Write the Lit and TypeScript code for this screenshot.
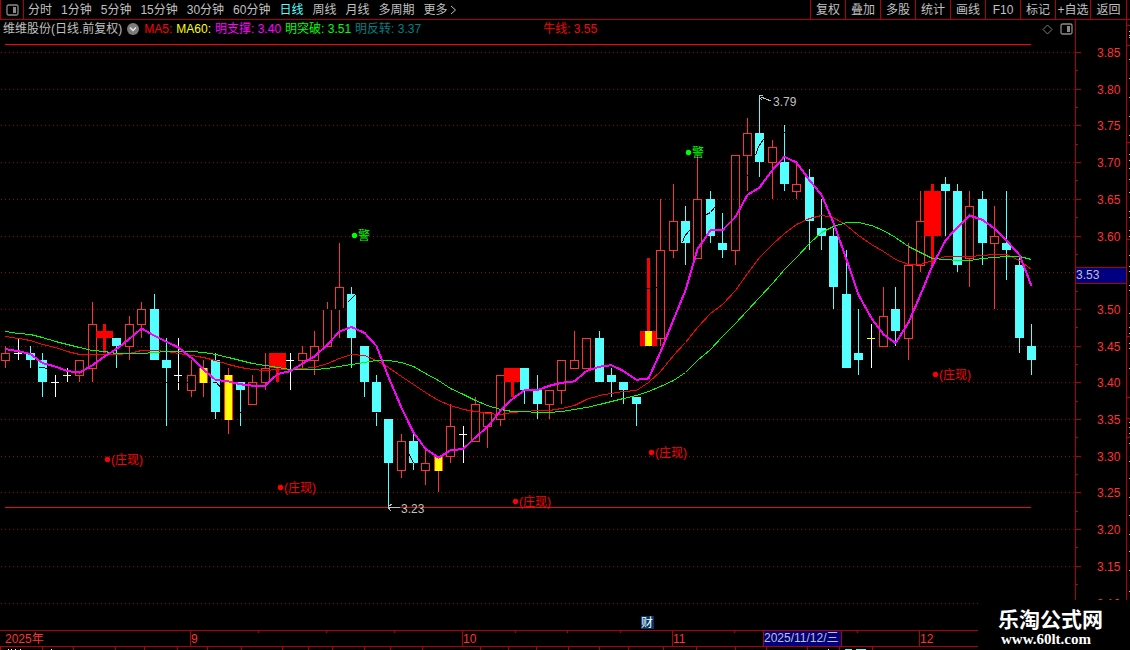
import { LitElement, html, svg, css } from "lit";
import { customElement, state } from "lit/decorators.js";

type Kind = "up" | "down" | "doji" | "turn" | "hot" | "fade" | "launch" | "spark";
/** body top, body bottom, high, low (in cents), kind */
type Bar = [number, number, number, number, Kind];

const BARS: Bar[] = [
  [344, 343, 345, 342, "up"], [344, 344, 346, 343, "doji"], [344, 343, 345, 342, "down"],
  [343, 340, 344, 338, "down"], [340, 340, 341, 338, "doji"], [341, 341, 342, 340, "spark"],
  [343, 341, 343, 340, "up"], [348, 342, 351, 340, "up"], [347, 346, 348, 344, "fade"],
  [346, 345, 346, 342, "down"], [348, 345, 349, 343, "up"], [350, 348, 351, 346, "up"],
  [350, 343, 352, 343, "down"], [343, 342, 346, 334, "down"], [341, 341, 346, 339, "doji"],
  [341, 339, 343, 338, "up"], [342, 340, 343, 338, "turn"], [343, 336, 344, 335, "down"],
  [341, 335, 342, 333, "turn"], [340, 339, 340, 334, "down"], [340, 337, 341, 337, "up"],
  [342, 340, 344, 339, "up"], [344, 342, 344, 340, "hot"], [343, 343, 344, 339, "doji"],
  [344, 343, 345, 342, "up"], [345, 343, 347, 341, "up"], [350, 345, 351, 345, "up"],
  [353, 350, 359, 346, "up"], [352, 346, 353, 342, "down"], [345, 340, 345, 338, "down"],
  [340, 336, 341, 334, "down"], [335, 329, 335, 323, "down"], [332, 328, 333, 327, "up"],
  [332, 329, 333, 328, "down"], [329, 328, 331, 326, "up"], [330, 328, 330, 325, "turn"],
  [334, 330, 337, 329, "up"], [333, 333, 334, 329, "doji"], [337, 332, 338, 332, "up"],
  [336, 334, 336, 331, "up"], [341, 335, 341, 334, "up"], [342, 340, 342, 338, "hot"],
  [342, 339, 342, 337, "down"], [339, 337, 341, 335, "down"], [339, 337, 339, 335, "up"],
  [343, 339, 343, 337, "up"], [343, 342, 347, 342, "up"], [346, 342, 346, 342, "up"],
  [346, 340, 347, 340, "down"], [341, 340, 342, 338, "down"], [340, 339, 340, 337, "down"],
  [338, 337, 338, 334, "down"], [347, 345, 357, 345, "launch"], [358, 346, 365, 345, "up"],
  [362, 358, 367, 357, "up"], [362, 359, 364, 356, "down"], [365, 357, 371, 357, "up"],
  [365, 360, 366, 359, "down"], [359, 358, 363, 357, "down"], [371, 358, 371, 356, "up"],
  [374, 371, 376, 366, "up"], [374, 370, 379, 368, "down"], [372, 370, 373, 365, "up"],
  [370, 367, 375, 366, "down"], [367, 366, 370, 365, "up"], [368, 362, 369, 358, "down"],
  [361, 360, 365, 358, "down"], [360, 353, 361, 350, "down"], [352, 342, 358, 342, "down"],
  [344, 343, 350, 341, "down"], [346, 346, 348, 342, "spark"], [349, 345, 353, 345, "up"],
  [350, 347, 353, 345, "down"], [356, 346, 359, 343, "up"], [362, 356, 366, 355, "up"],
  [366, 360, 367, 356, "hot"], [367, 366, 368, 360, "down"], [366, 356, 367, 355, "down"],
  [364, 357, 366, 353, "up"], [365, 359, 366, 356, "down"], [360, 359, 364, 350, "up"],
  [359, 358, 366, 354, "down"], [356, 346, 357, 344, "down"], [345, 343, 348, 341, "down"],
];

/** Averages that reach back before the first visible bar. */
const LEAD_IN = [344.6, 344.3, 343.9, 342.7];

/** Mid-term trend, plot height at each bar. */
const MID_TREND = [
  336, 338, 340, 344, 347, 351, 354, 354, 354, 354, 353, 350, 350, 351, 353, 355, 357, 360, 364, 367, 369,
  370, 369, 369, 368, 367, 363, 358, 354, 355, 360, 367, 376, 384, 392, 400, 405, 409, 411, 413, 414, 412,
  411, 410, 410, 408, 405, 399, 395, 393, 391, 390, 382, 371, 355, 342, 327, 313, 304, 290, 273, 257, 244,
  233, 224, 218, 215, 217, 225, 235, 244, 251, 259, 264, 264, 260, 256, 256, 256, 255, 254, 254, 260, 269,
];

/** Long-term trend, plot height at each bar. */
const LONG_TREND = [
  331, 333, 334, 337, 341, 344, 347, 350, 351, 353, 353, 353, 352, 351, 351, 351, 352, 354, 357, 360, 363,
  365, 367, 369, 369, 369, 368, 366, 364, 362, 360, 360, 362, 366, 373, 380, 388, 394, 400, 405, 409, 411,
  411, 412, 412, 411, 409, 407, 404, 401, 398, 395, 391, 386, 380, 372, 360, 349, 336, 323, 310, 297, 283,
  269, 257, 243, 232, 226, 222, 222, 225, 230, 237, 246, 252, 258, 259, 260, 260, 258, 257, 256, 256, 259,
];

/** Black trace crossing the candles: bar index, then x offset / y pairs. */
const CUTS: [number, number[][]][] = [
  [3, [[-4, 367], [2, 367], [5, 369]]],
  [13, [[-3, 382], [28, 382]]],
  [17, [[-3, 382], [1, 382], [5, 387]]],
  [19, [[-4, 412], [4, 412]]],
  [26, [[-8, 309], [16, 309], [18, 304]]],
  [28, [[-4, 302], [4, 294]]],
  [30, [[-4, 412], [4, 412]]],
  [33, [[-4, 454], [0, 463]]],
  [53, [[-16, 288], [-4, 287], [4, 281]]],
  [55, [[-3, 242], [-1, 236], [4, 230]]],
  [57, [[-4, 214], [0, 212], [4, 207]]],
  [60, [[-4, 176], [4, 175]]],
  [61, [[-4, 155], [-1, 146], [4, 139]]],
  [63, [[-4, 132], [4, 132]]],
];

const SIGNALS: { bar: number; y: number; text: string; tone: string }[] = [
  { bar: 8, y: 459, text: "(庄现)", tone: "buy" },
  { bar: 22, y: 487, text: "(庄现)", tone: "buy" },
  { bar: 28, y: 235, text: "警", tone: "warn" },
  { bar: 41, y: 501, text: "(庄现)", tone: "buy" },
  { bar: 52, y: 452, text: "(庄现)", tone: "buy" },
  { bar: 55, y: 152, text: "警", tone: "warn" },
  { bar: 75, y: 374, text: "(庄现)", tone: "buy" },
];

const PERIODS = ["分时", "1分钟", "5分钟", "15分钟", "30分钟", "60分钟", "日线", "周线", "月线", "多周期"];
const ACTIONS = ["复权", "叠加", "多股", "统计", "画线", "F10", "标记", "+自选", "返回"];
const MONTHS: [number, string][] = [[15, "9"], [37, "10"], [54, "11"], [74, "12"]];
const PANE_TICKS = [
  0, 42, 73, 115, 144, 177, 207, 241, 282, 308, 332, 364, 390, 422, 480, 508, 536, 568, 599, 628, 663, 696,
  735, 766, 807, 839, 872,
];
const EDGE_LINES = [25, 45, 142, 239, 336, 397, 418, 437];
const EDGE_MARKS = [
  31, 35, 37, 59, 78, 97, 116, 135, 154, 160, 168, 179, 192, 211, 217, 230, 236, 255, 266, 271, 285, 290, 313,
  327, 333, 343, 348, 368, 422, 427, 433, 443, 461, 478, 497, 515, 534, 551, 570, 591,
];
const LEVELS = Array.from({ length: 16 }, (_, i) => 385 - i * 5);

const priceY = (cents: number) => Math.round(52 + (385 - cents) * 7.34);

const panelIcon = html`<svg class="icon" width="13" height="12" viewBox="0 0 13 12" aria-hidden="true">
  <rect x="1" y="1" width="11" height="10" rx="1.5" fill="none" stroke="#8a8a8a" stroke-width="1.3" />
  <rect x="7" y="3" width="3" height="6" fill="#8a8a8a" />
</svg>`;

@customElement("app-root")
export class AppRoot extends LitElement {
  static styles = css`
    :host {
      display: block;
      position: relative;
      overflow: hidden;
      background: #000;
      color: #c0c0c0;
      font: 12px/18px "Liberation Sans", "Noto Sans CJK SC", sans-serif;
    }
    button {
      margin: 0;
      padding: 0;
      border: 0;
      background: none;
      color: inherit;
      font: inherit;
      white-space: nowrap;
      cursor: pointer;
    }
    svg {
      display: block;
    }
    .toolbar {
      display: flex;
      justify-content: space-between;
      height: 19px;
      border-bottom: 1px solid #b00000;
      padding-right: 3px;
    }
    .periods {
      display: flex;
      gap: 9px;
      min-width: 0;
    }
    .toggle {
      display: grid;
      place-items: center;
      width: 24px;
      box-sizing: border-box;
      border: solid #b00000;
      border-width: 0 1px;
      margin-right: -5px;
    }
    .current {
      color: #54ffff;
    }
    .more {
      display: flex;
      align-items: center;
      gap: 2px;
    }
    .actions {
      display: flex;
      border-right: 1px solid #b00000;
    }
    .action {
      width: 35px;
      box-sizing: border-box;
      border-left: 1px solid #b00000;
    }
    .action:last-child {
      width: 36px;
    }
    .workspace {
      display: grid;
      grid-template-columns: minmax(0, 1fr) 51px 4px;
    }
    .plot {
      min-width: 0;
    }
    .legend {
      display: flex;
      align-items: center;
      gap: 4px;
      height: 18px;
      padding: 0 2px 0 3px;
      white-space: nowrap;
    }
    .fold {
      margin: 0 1px;
    }
    .tools {
      display: flex;
      align-items: center;
      gap: 7px;
      margin-left: auto;
    }
    .red {
      color: #f00;
    }
    .yellow {
      color: #ff0;
    }
    .magenta {
      color: #f0f;
    }
    .green {
      color: #0f0;
    }
    .teal {
      color: #008080;
    }
    .bull {
      margin-left: 118px;
    }
    .chart {
      width: 100%;
      height: 592px;
      shape-rendering: crispEdges;
    }
    .scale,
    .edge {
      width: 100%;
      height: 610px;
      shape-rendering: crispEdges;
    }
    .times {
      width: 100%;
      height: 20px;
      shape-rendering: crispEdges;
    }
    .buy {
      fill: #f00;
    }
    .warn {
      fill: #0f0;
    }
    .dot {
      shape-rendering: auto;
    }
    .note {
      fill: #c0c0c0;
    }
    .tag {
      fill: #ff3232;
    }
    .brand {
      position: absolute;
      right: 0;
      bottom: 0;
      width: 152px;
      height: 50px;
      box-sizing: border-box;
      padding: 6px 0 0 20px;
      background: #000;
      color: #fff;
      white-space: nowrap;
    }
    .brand-name {
      display: block;
      font: bold 21px/24px "Noto Sans CJK SC", sans-serif;
    }
    .brand-url {
      display: block;
      padding-left: 3px;
      font: bold 15px/18px "Liberation Serif", serif;
      color: inherit;
      text-decoration: none;
    }
  `;

  @state() private plotWidth = 1075;
  @state() private period = "日线";
  private observer?: ResizeObserver;

  firstUpdated() {
    const plot = this.renderRoot.querySelector(".plot") as HTMLElement;
    this.observer = new ResizeObserver((entries) => {
      this.plotWidth = Math.round(entries[0].contentRect.width);
    });
    this.observer.observe(plot);
  }

  disconnectedCallback() {
    super.disconnectedCallback();
    this.observer?.disconnect();
  }

  private barX(i: number) {
    return Math.round(5.2 + (i * (this.plotWidth - 49)) / (BARS.length - 1));
  }

  private trace(ys: number[], color: string, width: number) {
    const points = ys.map((y, i) => `${this.barX(i) + 0.5},${y + 0.5}`).join(" ");
    return svg`<polyline points=${points} fill="none" stroke=${color} stroke-width=${width} />`;
  }

  private average() {
    const closes = BARS.map(([top, bottom, , , kind]) => (kind === "down" || kind === "fade" ? bottom : top));
    return closes.map((_, i) => {
      const cents = i < 4 ? LEAD_IN[i] : closes.slice(i - 4, i + 1).reduce((a, b) => a + b, 0) / 5;
      return 52 + (385 - cents) * 7.34;
    });
  }

  private candle([top, bottom, high, low, kind]: Bar, i: number) {
    const x = this.barX(i);
    const [t, b, h, l] = [top, bottom, high, low].map(priceY);
    if (kind === "doji" || kind === "spark") {
      return svg`<rect x=${x} y=${h} width="1" height=${l - h} fill="#fff" />
        <rect x=${x - 4} y=${t} width="8" height="1" fill=${kind === "spark" ? "#ff0" : "#fff"} />`;
    }
    if (kind === "down") {
      return svg`<rect x=${x} y=${h} width="1" height=${l - h} fill="#54ffff" />
        <rect x=${x - 4} y=${t} width="9" height=${b - t} fill="#54ffff" />`;
    }
    if (kind === "hot" || kind === "fade" || kind === "launch") {
      return svg`<rect x=${x - 1} y=${h} width="3" height=${l - h} fill="#f00" />
        <rect x=${x - 8} y=${t} width="17" height=${b - t} fill="#f00" />
        ${kind === "launch" ? svg`<rect x=${x - 3} y=${t} width="7" height=${b - t} fill="#ff0" />` : ""}`;
    }
    return svg`<path d="M${x + 0.5} ${h}V${t}M${x + 0.5} ${b}V${l}" stroke="#ff3232" />
      <rect x=${x - 3.5} y=${t + 0.5} width="8" height=${b - t} fill="none" stroke="#ff3232" />
      ${kind === "turn" ? svg`<rect x=${x - 3} y=${t} width="7" height=${b - t + 1} fill="#ff0" />` : ""}`;
  }

  private renderChart() {
    const w = this.plotWidth;
    const first = this.barX(0);
    const last = this.barX(BARS.length - 1);
    const peak = this.barX(61);
    const trough = this.barX(31);
    const report = this.barX(52) - 7;
    return html`<svg class="chart" viewBox="0 38 ${w} 592" role="img" aria-label="维维股份 日线">
      ${LEVELS.map(
        (p) => svg`<path d="M1 ${priceY(p) + 0.5}H${w}" stroke="#a00000" stroke-dasharray="1 3" />`
      )}
      <path d="M${first} 44.5H${last}" stroke="#f00" />
      <path d="M${first} 507.5H${last}" stroke="#e01010" />
      ${BARS.map((bar, i) => this.candle(bar, i))}
      ${CUTS.map(
        ([i, points]) => svg`<polyline fill="none" stroke="#000"
          points=${points.map(([dx, y]) => `${this.barX(i) + dx + 0.5},${y + 0.5}`).join(" ")} />`
      )}
      ${this.trace(MID_TREND, "#f00", 1)} ${this.trace(LONG_TREND, "#0f0", 1)}
      ${this.trace(this.average(), "#f0f", 2)}
      ${SIGNALS.map(
        (s) => svg`<g class=${s.tone}>
          <circle class="dot" cx=${this.barX(s.bar) + 3.5} cy=${s.y + 0.5} r="2.7" />
          <text x=${this.barX(s.bar) + 7} y=${s.y + 5}>${s.text}</text>
        </g>`
      )}
      <path d="M${peak} 95.5H${peak + 4}M${peak} 97L${peak + 3} 100M${peak + 2} 97L${peak + 12} 101"
        stroke="#c0c0c0" fill="none" />
      <text class="note" x=${peak + 14} y="106">3.79</text>
      <path d="M${trough} 507.5H${trough + 12}M${trough} 507L${trough + 4} 504M${trough} 507L${trough + 3} 511"
        stroke="#c0c0c0" fill="none" />
      <text class="note" x=${trough + 13} y="513">3.23</text>
      <rect x=${report} y="616" width="13" height="13" fill="#003868" />
      <text x=${report} y="627" fill="#fff">财</text>
    </svg>`;
  }

  private renderTimes() {
    const end = this.plotWidth;
    const starts = MONTHS.map(([i]) => this.barX(i) - 1);
    const cursor = this.barX(61) + 4;
    return html`<svg class="times" viewBox="0 630 ${this.plotWidth} 20">
      <path d="M0 630.5H${end}M0 646.5H${end}" stroke="#b00000" />
      <text class="tag" x="5" y="643">2025年</text>
      ${MONTHS.map(
        ([, label], k) => svg`<path d="M${starts[k] + 0.5} 630V646" stroke="#b00000" />
          <text class="tag" x=${starts[k] + 1} y="643">${label}</text>`
      )}
      ${starts.slice(0, -1).map((s, k) =>
        [1, 2, 3].map((q) => {
          const x = Math.round(s + ((starts[k + 1] - s) * q) / 4) + 0.5;
          return svg`<path d="M${x} 631V633" stroke="#b00000" />`;
        })
      )}
      ${PANE_TICKS.map((x) => svg`<path d="M${x + 0.5} 647V650" stroke="#b00000" />`)}
      <path d="M8 649.5H9M11 649.5H12M15 649.5H16M20 649.5H21M51 649.5H52M828 649.5H829" stroke="#fff" />
      <path d="M845 649.5H852M856 649.5H866" stroke="#54ffff" />
      <rect x=${cursor + 0.5} y="630.5" width="78" height="16" fill="#000080" stroke="#b00000" />
      <text class="note" x=${cursor + 1} y="642">2025/11/12/三</text>
    </svg>`;
  }

  private renderScale() {
    return html`<svg class="scale" viewBox="0 20 51 610">
      <path d="M0.5 20V630" stroke="#b00000" />
      ${LEVELS.map(
        (p) => svg`<path d="M1 ${priceY(p) + 0.5}H6M1 ${priceY(p - 2.5) + 0.5}H3" stroke="#b00000" />
          ${p === 355 ? "" : svg`<text class="tag" x="22" y=${priceY(p) + 5}>${(p / 100).toFixed(2)}</text>`}`
      )}
      <rect x="0.5" y="267.5" width="51" height="16" fill="#000080" stroke="#b00000" />
      <text class="note" x="1" y="279">3.53</text>
    </svg>`;
  }

  render() {
    return html`
      <header class="toolbar">
        <nav class="periods" aria-label="周期">
          <button class="toggle" aria-label="侧栏">${panelIcon}</button>
          ${PERIODS.map(
            (p) => html`<button
              class=${p === this.period ? "current" : ""}
              aria-pressed=${p === this.period}
              @click=${() => (this.period = p)}
            >${p}</button>`
          )}
          <button class="more">更多<svg width="7" height="10" viewBox="0 0 7 10" aria-hidden="true">
            <path d="M1 1L5.5 5L1 9" fill="none" stroke="#c0c0c0" />
          </svg></button>
        </nav>
        <div class="actions">${ACTIONS.map((a) => html`<button class="action">${a}</button>`)}</div>
      </header>
      <main class="workspace">
        <section class="plot">
          <div class="legend">
            <span>维维股份(日线.前复权)</span>
            <svg class="fold" width="12" height="12" viewBox="0 0 12 12" aria-hidden="true">
              <circle cx="6" cy="6" r="6" fill="#7c7c7c" />
              <path d="M3 4.5L6 7.5L9 4.5" fill="none" stroke="#e8e8e8" stroke-width="1.4" />
            </svg>
            <span class="red">MA5:</span>
            <span class="yellow">MA60:</span>
            <span class="magenta">明支撑: 3.40</span>
            <span class="green">明突破: 3.51</span>
            <span class="teal">明反转: 3.37</span>
            <span class="red bull">牛线: 3.55</span>
            <span class="tools">
              <svg width="11" height="11" viewBox="0 0 11 11" aria-hidden="true">
                <path d="M5.5 1L10 5.5L5.5 10L1 5.5Z" fill="none" stroke="#808080" />
              </svg>
              ${panelIcon}
            </span>
          </div>
          ${this.renderChart()} ${this.renderTimes()}
        </section>
        ${this.renderScale()}
        <svg class="edge" viewBox="0 20 4 610" aria-hidden="true">
          <path d="M0.5 20V630" stroke="#b00000" />
          ${EDGE_LINES.map((y) => svg`<path d="M1 ${y + 0.5}H4" stroke="#b00000" />`)}
          ${EDGE_MARKS.map((y) => svg`<rect x="3" y=${y} width="1" height="1" fill="#c0c0c0" />`)}
        </svg>
      </main>
      <footer class="brand">
        <span class="brand-name">乐淘公式网</span>
        <a class="brand-url" href="#home">www.60lt.com</a>
      </footer>
    `;
  }
}
